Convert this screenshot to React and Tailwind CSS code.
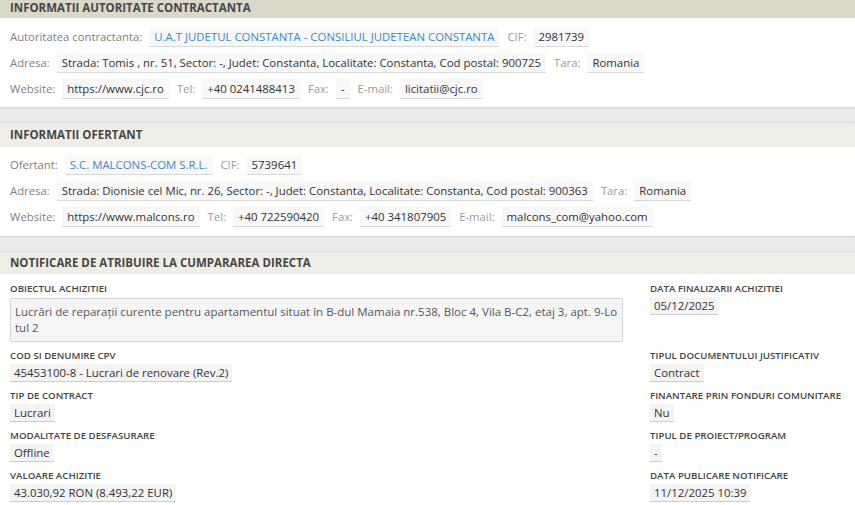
import React from 'react';

const font = { fontFamily: '"Open Sans", "Liberation Sans", sans-serif' };

function Chip({ children, link }) {
  return (
    <span
      className={`inline-flex h-[20px] items-center px-[5px] text-[11.4px] bg-[#f8f8f8] border-b border-[#d8d8d8] whitespace-nowrap ${
        link ? 'text-[#3d89c9] border-[#cfdbe6]' : 'text-[#333]'
      }`}
    >
      {children}
    </span>
  );
}

function Pair({ label, value, link, light }) {
  return (
    <div className="flex items-center gap-[7px]">
      <span className={light ? 'text-[#9a9a9a]' : 'text-[#808080]'}>{label}</span>
      <Chip link={link}>{value}</Chip>
    </div>
  );
}

function Row({ children }) {
  return <div className="flex items-center h-[22px] gap-[8px]">{children}</div>;
}

function Field({ label, value }) {
  return (
    <div className="flex flex-col items-start">
      <div className="h-[14px] leading-[14px] text-[9.7px] font-semibold text-[#444] uppercase whitespace-nowrap">{label}</div>
      <span className="mt-[1px] inline-flex h-[18px] items-center px-[4px] bg-[#f4f4f4] border-b border-[#cccccc] text-[11.4px] text-[#333] whitespace-nowrap">
        {value}
      </span>
    </div>
  );
}

export default function App() {
  return (
    <div className="w-[855px] h-[505px] overflow-hidden bg-[#ebebeb]" style={font}>
      {/* Autoritate contractanta */}
      <div className="bg-white shadow-[0_1px_2px_rgba(0,0,0,0.12)]">
        <div className="h-[18px] flex items-center pb-[3px] px-[10px] bg-[#dad8c9] text-[11.5px] font-bold text-[#474747]">
          INFORMATII AUTORITATE CONTRACTANTA
        </div>
        <div className="px-[10px] pt-[8px] pb-[7px] flex flex-col gap-[4px] text-[11.3px]">
          <Row>
            <Pair label="Autoritatea contractanta:" value="U.A.T JUDETUL CONSTANTA - CONSILIUL JUDETEAN CONSTANTA" link />
            <Pair label="CIF:" value="2981739" light />
          </Row>
          <Row>
            <Pair label="Adresa:" value="Strada: Tomis , nr. 51, Sector: -, Judet: Constanta, Localitate: Constanta, Cod postal: 900725" />
            <Pair label="Tara:" value="Romania" light />
          </Row>
          <Row>
            <Pair label="Website:" value="https://www.cjc.ro" />
            <Pair label="Tel:" value="+40 0241488413" light />
            <Pair label="Fax:" value="-" light />
            <Pair label="E-mail:" value="licitatii@cjc.ro" light />
          </Row>
        </div>
      </div>

      {/* Ofertant */}
      <div className="mt-[15px] bg-white border-t border-[#dedede] shadow-[0_1px_2px_rgba(0,0,0,0.12)]">
        <div className="h-[24px] flex items-center px-[10px] bg-[#efeee6] text-[11.5px] font-bold text-[#474747]">
          INFORMATII OFERTANT
        </div>
        <div className="px-[10px] pt-[7px] pb-[8px] flex flex-col gap-[4px] text-[11.3px]">
          <Row>
            <Pair label="Ofertant:" value="S.C. MALCONS-COM S.R.L." link />
            <Pair label="CIF:" value="5739641" light />
          </Row>
          <Row>
            <Pair label="Adresa:" value="Strada: Dionisie cel Mic, nr. 26, Sector: -, Judet: Constanta, Localitate: Constanta, Cod postal: 900363" />
            <Pair label="Tara:" value="Romania" light />
          </Row>
          <Row>
            <Pair label="Website:" value="https://www.malcons.ro" />
            <Pair label="Tel:" value="+40 722590420" light />
            <Pair label="Fax:" value="+40 341807905" light />
            <Pair label="E-mail:" value="malcons_com@yahoo.com" light />
          </Row>
        </div>
      </div>

      {/* Notificare */}
      <div className="mt-[15px] bg-white border-t border-[#dedede] shadow-[0_1px_2px_rgba(0,0,0,0.12)]">
        <div className="h-[22px] flex items-center px-[10px] bg-[#efeee6] text-[11.5px] font-bold text-[#474747]">
          NOTIFICARE DE ATRIBUIRE LA CUMPARAREA DIRECTA
        </div>
        <div className="px-[10px] pt-[8px] pb-[10px] grid grid-cols-[613px_1fr] gap-x-[27px] gap-y-[7px] items-start">
          <div className="flex flex-col">
            <div className="h-[14px] leading-[14px] text-[9.7px] font-semibold text-[#444] uppercase">Obiectul achizitiei</div>
            <div className="mt-[2px] h-[44px] px-[4px] py-[5px] bg-[#f5f5f5] border border-[#d4d4d4] rounded-[2px] text-[11.5px] leading-[15.5px] text-[#555]">
              Lucrări de reparații curente pentru apartamentul situat în B-dul Mamaia nr.538, Bloc 4, Vila B-C2, etaj 3, apt. 9-Lo
              <br />
              tul 2
            </div>
          </div>
          <Field label="Data finalizarii achizitiei" value="05/12/2025" />
          <Field label="Cod si denumire CPV" value="45453100-8 - Lucrari de renovare (Rev.2)" />
          <Field label="Tipul documentului justificativ" value="Contract" />
          <Field label="Tip de contract" value="Lucrari" />
          <Field label="Finantare prin fonduri comunitare" value="Nu" />
          <Field label="Modalitate de desfasurare" value="Offline" />
          <Field label="Tipul de proiect/program" value="-" />
          <Field label="Valoare achizitie" value="43.030,92 RON (8.493,22 EUR)" />
          <Field label="Data publicare notificare" value="11/12/2025 10:39" />
        </div>
      </div>
    </div>
  );
}
